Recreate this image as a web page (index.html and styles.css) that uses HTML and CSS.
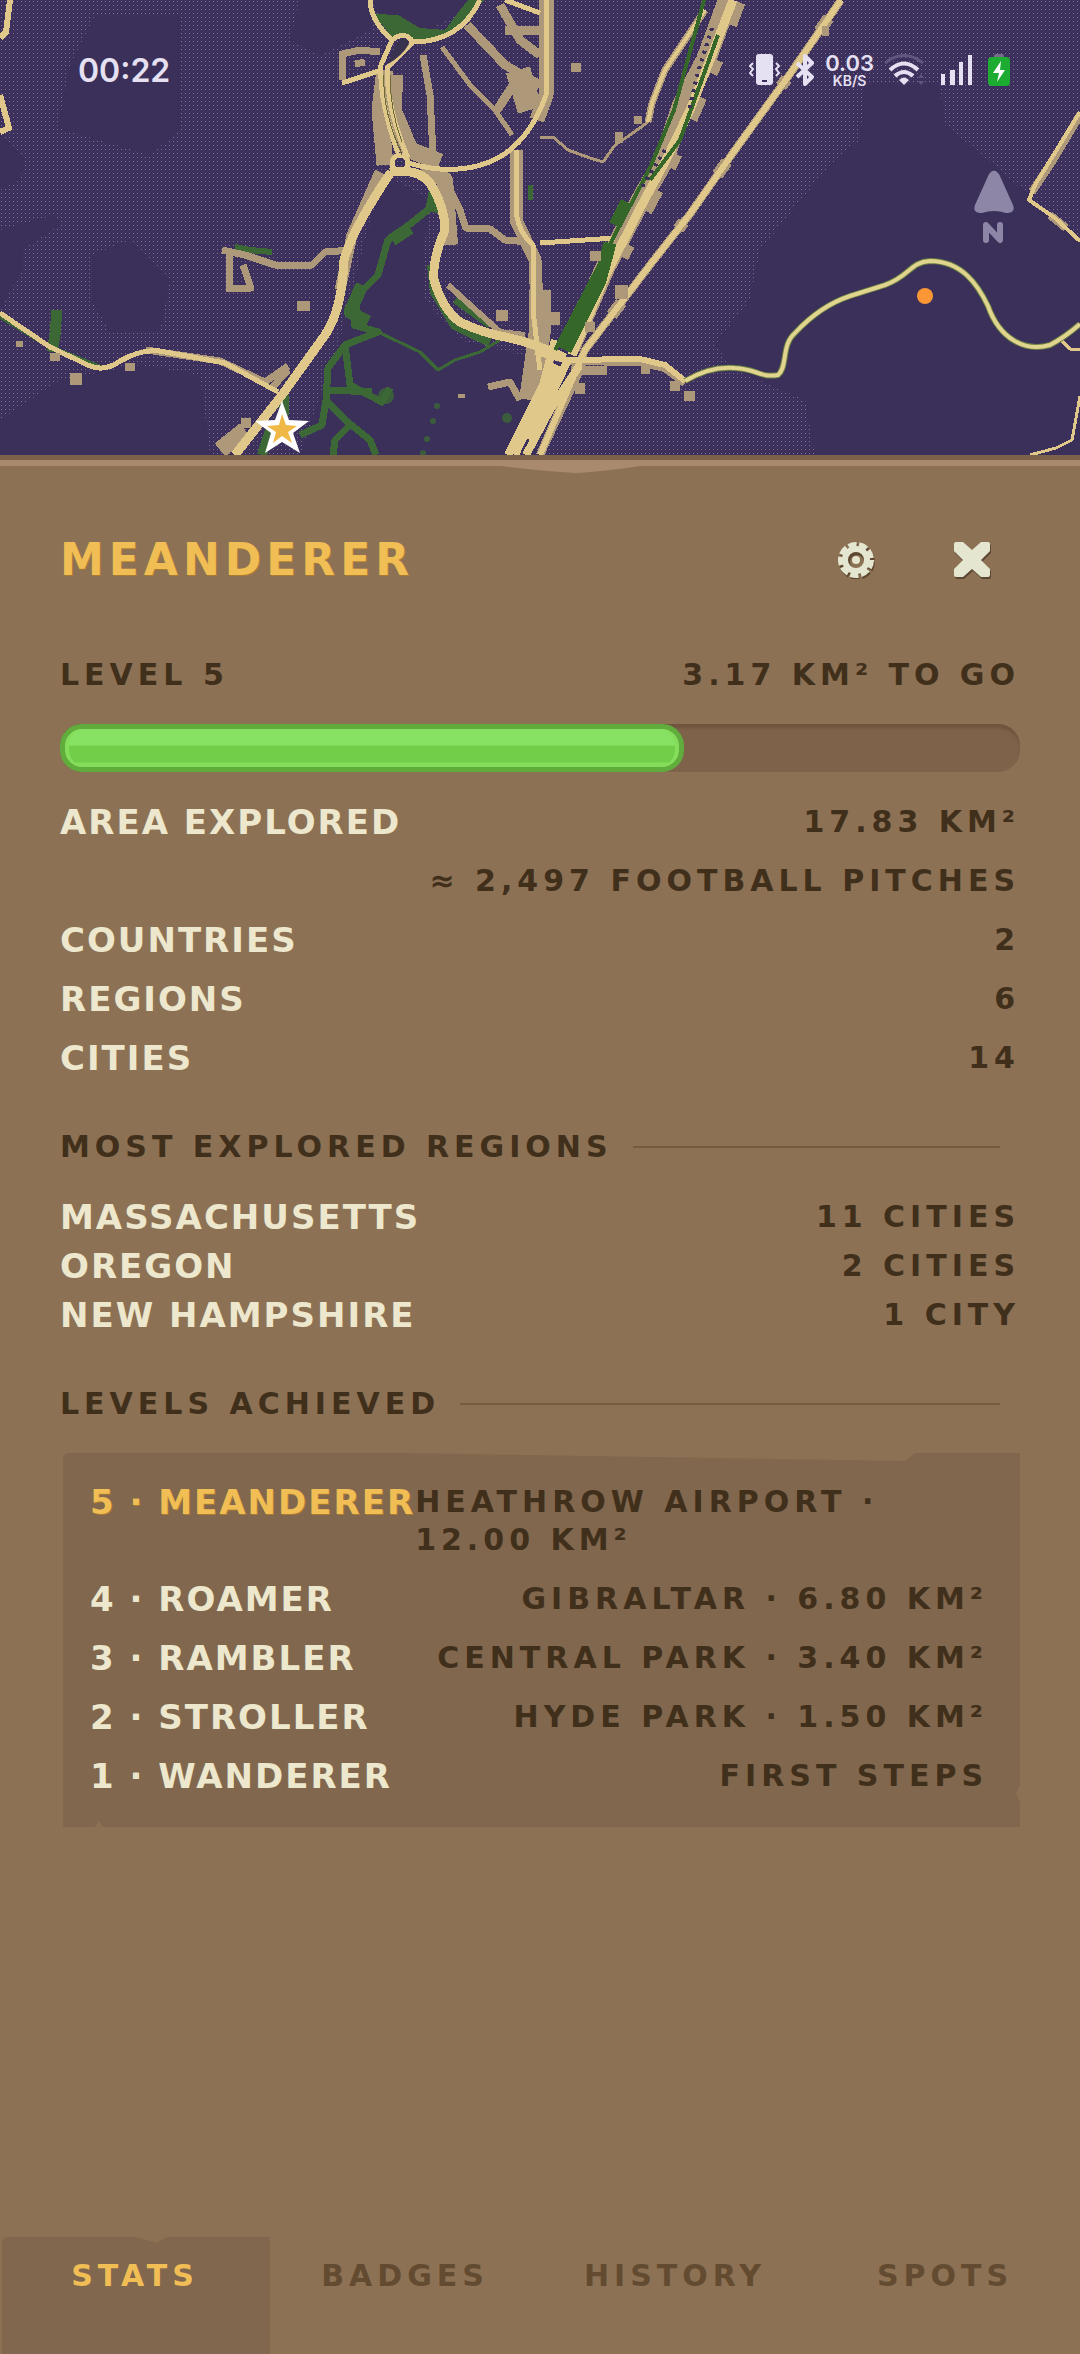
FILE: index.html
```html
<!DOCTYPE html>
<html lang="en">
<head>
<meta charset="utf-8">
<meta name="viewport" content="width=device-width, initial-scale=1">
<title>Meanderer</title>
<link rel="stylesheet" href="styles.css">
</head>
<body>
<div class="app">
  <header class="map">
    <svg class="map-art" viewBox="0 0 1080 455" preserveAspectRatio="xMidYMid slice" aria-hidden="true">
      <defs>
        <pattern id="dots" width="4" height="4" patternUnits="userSpaceOnUse">
          <rect width="4" height="4" fill="#3b2f5c"/>
          <rect x="1" y="1" width="1" height="1" fill="#8a7391"/>
          <rect x="3" y="3" width="1" height="1" fill="#46376c"/>
        </pattern>
      </defs>
      <rect width="1080" height="455" fill="url(#dots)"/>
      <!-- unlit ground -->
      <g fill="#3a3059">
        <path d="M95 15H180V130L150 155 58 128 70 65Z"/>
        <path d="M300 0H370V30L320 55 290 40Z"/>
        <path d="M0 135L25 160 20 180 0 190Z"/>
        <path d="M0 230L55 215 60 225 22 250V270L0 310Z"/>
        <path d="M92 255L130 240 170 280 160 330 110 332 92 300Z"/>
        <path d="M60 380L140 365 200 375 210 455H0V420Z"/>
        <path d="M385 175L430 200 425 240 425 300 460 340 540 360 535 455H300L340 340 365 240Z"/>
        <path d="M865 85H940L945 125 1000 170 1080 240V455H815L805 400 735 370 715 345 750 300 760 250 830 165 860 140Z"/>
        <path d="M445 0H480L420 35 385 25 372 0Z"/>
      </g>
      <g fill="none" stroke-linejoin="round" shape-rendering="crispEdges">
        <!-- parks and trails -->
        <g stroke="#3c6836" stroke-width="7">
          <path d="M57 310L55 335 52 352" stroke-width="11"/>
          <path d="M430 175L434 205 400 232 388 240 378 275 358 295 354 325 378 332 345 345 328 368 326 400 345 420 370 440 376 455"/>
          <path d="M437 185L432 212" stroke-width="14"/>
          <path d="M410 228L392 240M362 285L350 312 368 322" stroke-width="13"/>
          <path d="M345 345L350 385 382 402 390 388M330 390L372 392M326 400L322 425 300 435M350 425L335 440 333 455"/>
          <path d="M378 332L420 352 438 370 455 360 480 352 500 340" stroke-width="3"/>
          <path d="M432 265L435 292 455 325 490 342" stroke-width="10"/>
          <path d="M0 316L52 348 102 368" stroke-width="5"/>
          <path d="M235 247L250 250 272 252" stroke-width="6"/>
          <path d="M284 395V415M262 455L270 430" stroke-width="10"/>
          <path d="M525 420L514 445M545 355L530 370M455 300L490 325"/>
          <path d="M530 185V200" stroke-width="5"/>
        </g>
        <path d="M370 0L376 14 398 15 420 28 445 30 460 10 468 0H484L455 34 420 40 392 37 374 15Z" fill="#3c6836"/>
        <!-- built-up land -->
        <g stroke="#ae987a" stroke-width="7">
          <path d="M230 252L229 289 251 288 243 265M222 250L245 255 275 265 312 265 325 252 352 250"/>
          <path d="M342 80V54L360 50 380 52M355 64L365 62"/>
          <path d="M385 70L380 110 385 165M395 75L393 110 410 150 440 162" stroke-width="17"/>
          <path d="M423 55L430 95 433 155"/>
          <path d="M442 47L470 85 495 110 512 135" stroke-width="5"/>
          <path d="M467 25L505 65 540 85M500 5L520 40 540 55M505 30H540M497 110L520 75" stroke-width="9"/>
          <path d="M518 70L530 110" stroke-width="25"/>
          <path d="M425 165L445 180 450 245" stroke-width="16"/>
          <path d="M450 190L460 210 466 228 490 229 505 240 530 242" stroke-width="7"/>
          <path d="M516 150V220L535 260 538 330" stroke-width="13"/>
          <path d="M448 285L470 305 500 332 525 335" stroke-width="6"/>
          <path d="M380 172L352 235 340 290" stroke-width="11"/>
          <path d="M146 350L220 361 265 382 288 366M270 390L288 370M488 387L510 382 520 400"/>
          <path d="M220 450L245 430" stroke-width="17"/>
          <path d="M546 0V95L537 120" stroke-width="15"/>
          <path d="M728 0L706 60 682 105 664 160 638 205 605 268 570 348" stroke-width="20"/>
          <path d="M733 0L710 60 688 110 666 160 638 212 606 275" stroke-width="26" stroke-dasharray="24 38 14 26"/>
          <path d="M841 0L790 74 735 150 690 214 650 265 585 350 540 455" stroke-width="8"/>
          <path d="M841 0L790 74 735 150 690 214 650 265 585 350 540 455" stroke-width="12" stroke-dasharray="0 22 16 58 9 71"/>
          <path d="M705 10L665 70 652 103 648 122" stroke-width="7"/>
          <path d="M565 361L640 362 665 368 685 383" stroke-width="8"/>
          <path d="M1080 115L1050 165 1032 192M1050 215L1066 228M580 370L540 455" stroke-width="8"/>
          <path d="M540 290V330L530 400" stroke-width="22"/>
          <path d="M540 137L553 137 568 150 590 158 603 162 615 145 630 135 648 122 652 108" stroke-width="3"/>
        </g>
        <!-- roads -->
        <g stroke="#dfc889" stroke-width="6">
          <path d="M0 313L50 347 90 366Q105 372 120 361Q145 347 165 352L225 363 278 392" stroke-width="5"/>
          <path d="M391 172Q352 230 344 260Q342 310 325 335L282 395 235 455" stroke-width="9"/>
          <path d="M370 0Q370 20 392 40Q405 30 413 42Q460 42 480 0M392 40L381 65Q379 100 398 153M413 42L387 68Q387 110 408 158" stroke-width="5"/>
          <circle cx="400" cy="163" r="8" stroke-width="5"/>
          <path d="M342 83L382 70M505 0L540 13" stroke-width="5"/>
          <path d="M390 172Q418 168 430 183Q445 207 445 230Q432 260 434 280Q443 310 460 322Q482 333 510 338Q540 345 565 358" stroke-width="9"/>
          <path d="M408 163Q460 178 498 158Q530 140 546 95V0M516 150V210Q518 232 533 245V310L540 370" stroke-width="5"/>
          <path d="M733 0L710 60 690 110 666 160 638 212 606 275 572 355" stroke-width="9"/>
          <path d="M705 10L665 70 652 103 648 122" stroke-width="4"/>
          <path d="M841 0L790 74 735 150 690 214 650 265 585 350 540 455"/>
          <path d="M535 352L565 360 640 359 665 365 685 381"/>
          <path d="M540 243L615 238" stroke-width="5"/>
          <path d="M555 340L543 385 508 455M568 360L530 440M580 365L550 410 526 455M557 365L515 455" stroke-width="8"/>
          <path d="M10 0L6 32 0 38M0 95L9 128 0 132"/>
          <path d="M1080 112L1035 185 1029 200 1055 218 1080 241" stroke-width="4"/>
          <path d="M1080 396L1072 440 1056 448 1030 455M1062 341L1070 349H1080" stroke-width="3"/>
        </g>
        <path d="M704 0L674 110 650 168 620 225 555 350M718 35L680 140 650 180" stroke="#356729" stroke-width="4"/>
        <path d="M627 202L615 225M610 243L600 280 565 350" stroke="#356729" stroke-width="13"/>
        <path d="M712 28L698 72 689 110M665 150L640 190" stroke="#3a3059" stroke-width="4" stroke-dasharray="3 5"/>
        <path d="M384 75Q382 110 402 155M390 75Q390 110 402 142" stroke="#6c6b37" stroke-width="1"/>
      </g>
      <path d="M397 43Q404 34 409 44Q402 56 388 64Z" fill="#38324e"/>
      <path d="M685 381Q710 366 735 368C757 369 760 378 778 375C788 367 781 345 795 333Q820 306 850 296L885 285C910 276 910 262 930 261C962 261 978 285 988 306C1000 340 1026 352 1050 345Q1065 337 1080 324" fill="none" stroke="#6c8045" stroke-width="6"/>
      <path d="M685 381Q710 366 735 368C757 369 760 378 778 375C788 367 781 345 795 333Q820 306 850 296L885 285C910 276 910 262 930 261C962 261 978 285 988 306C1000 340 1026 352 1050 345Q1065 337 1080 324" fill="none" stroke="#e0d48e" stroke-width="4"/>
      <path d="M297 301H310V311H297ZM70 373H82V385H70ZM125 363H135V371H125ZM16 341H23V347H16ZM50 353H60V361H50ZM241 418H251V428H241ZM496 310H508V321H496ZM458 394H465V398H458ZM571 63H581V72H571ZM634 116H642V124H634ZM615 132H623V143H615ZM615 285H628V299H615ZM590 251H601V261H590ZM585 322H595V332H585ZM575 383H585V394H575ZM582 366H607V375H582ZM641 366H650V374H641ZM670 381H680V391H670ZM684 391H695V401H684ZM822 26H829V36H822ZM542 312H560V325H542Z" fill="#ae987a"/>
      <g fill="#3c6836" fill-opacity=".8"><circle cx="507" cy="418" r="5"/><circle cx="437" cy="406" r="3"/><circle cx="433" cy="421" r="3"/><circle cx="427" cy="439" r="3"/><circle cx="423" cy="453" r="3"/><circle cx="386" cy="396" r="8"/></g>
      <circle cx="925" cy="296" r="8" fill="#fb9735"/>
      <path d="M282 401L289 420 309 421 293 433 300 453 282 442 265 453 271 433 255 421 275 420Z" fill="#fff"/>
      <path d="M282 414L286 425 297 426 288 432 292 443 282 436 273 443 276 432 267 426 279 425Z" fill="#f0b945"/>
      <path d="M989 174Q994 167 999 174L1013 205Q1016 213 1006 213Q994 209 982 213Q972 213 975 205Z" fill="#8d86a6"/>
      <path d="M986 240V225L1000 240V225" fill="none" stroke="#8d86a6" stroke-width="6" stroke-linejoin="round" stroke-linecap="round"/>
    </svg>
    <div class="status">
      <time class="clock">00:22</time>
      <div class="status-icons">
        <svg width="32" height="32" viewBox="0 0 32 32"><rect x="7" width="17" height="31" rx="3" fill="#e5e0f2"/><path d="M13 27H18" stroke="#3b2f5c" stroke-width="2"/><path d="M4 9L1 12 4 15 1 19 4 22M27 9L30 12 27 15 30 19 27 22" fill="none" stroke="#e5e0f2" stroke-width="2"/></svg>
        <svg width="20" height="32" viewBox="0 0 20 32"><path d="M2 9L17 23 10 30V2L17 9 2 23" fill="none" stroke="#e5e0f2" stroke-width="4" stroke-linejoin="round"/></svg>
        <div class="speed"><span class="rate">0.03</span><span class="unit">KB/S</span></div>
        <svg width="42" height="32" viewBox="0 0 42 32"><path d="M1 9Q20-6 39 9" fill="none" stroke="#615580" stroke-width="3"/><path d="M6 16Q20 3 34 16M11 22Q20 14 29 22" fill="none" stroke="#e5e0f2" stroke-width="4"/><path d="M15 26Q20 21 25 26L20 31Z" fill="#e5e0f2"/><path d="M34 24L37 20 40 24ZM34 27L37 31 40 27Z" fill="#615580"/></svg>
        <svg width="34" height="32" viewBox="0 0 34 32"><path d="M1 20H5V31H1ZM10 16H15V31H10ZM19 8H23V31H19ZM28 1H32V31H28Z" fill="#e5e0f2"/></svg>
        <svg width="22" height="32" viewBox="0 0 22 32"><rect x="6" width="10" height="6" rx="2" fill="#766d8c"/><rect y="3" width="22" height="29" rx="4" fill="#1dac32"/><path d="M13 7L5 19H11L9 28 17 16H12Z" fill="#fff"/></svg>
      </div>
    </div>
  </header>

  <main class="sheet">
    <svg class="sheet-edge" viewBox="0 0 1080 20" preserveAspectRatio="none" aria-hidden="true"><path d="M0 0H1080V5H0Z" fill="#7c624a"/><path d="M0 5H1080V11H640Q600 17 575 18Q545 16 500 11H0Z" fill="#a98a6e"/></svg>
    <div class="title-row">
      <h1>MEANDERER</h1>
      <div class="actions">
        <button type="button" aria-label="Settings"><svg width="38" height="38" viewBox="0 0 38 38"><g fill="none" stroke="#5c4832"><circle cx="20" cy="21" r="10" stroke-width="6"/><circle cx="20" cy="21" r="15" stroke-width="6" stroke-dasharray="8 2.47"/></g><g fill="none" stroke="#e5e6d0"><circle cx="19" cy="19" r="11" stroke-width="6"/><circle cx="19" cy="19" r="15" stroke-width="6" stroke-dasharray="8 2.47"/></g><circle cx="19" cy="19" r="4" fill="#e5e6d0"/></svg></button>
        <button type="button" aria-label="Close"><svg width="38" height="38" viewBox="0 0 38 38"><path d="M1 3Q1 1 3 1H10L19 9 28 1H35Q37 1 37 3V10L28 19 37 28V34Q37 36 35 36H28L19 28 10 36H3Q1 36 1 34V28L10 19 1 10Z" fill="#5c4832" transform="translate(1 2)"/><path d="M1 3Q1 1 3 1H10L19 9 28 1H35Q37 1 37 3V10L28 19 37 28V34Q37 36 35 36H28L19 28 10 36H3Q1 36 1 34V28L10 19 1 10Z" fill="#e5e6d0"/></svg></button>
      </div>
    </div>

    <section class="progress">
      <div class="row"><span class="muted">LEVEL 5</span><span class="muted">3.17 KM² TO GO</span></div>
      <div class="track" role="progressbar" aria-label="Level 5" aria-valuenow="65" aria-valuemin="0" aria-valuemax="100"><div class="fill" style="width:65%"></div></div>
    </section>

    <dl class="stats">
      <div class="row"><dt>AREA EXPLORED</dt><dd>17.83 KM²</dd></div>
      <div class="row row-end"><dd>≈ 2,497 FOOTBALL PITCHES</dd></div>
      <div class="row"><dt>COUNTRIES</dt><dd>2</dd></div>
      <div class="row"><dt>REGIONS</dt><dd>6</dd></div>
      <div class="row"><dt>CITIES</dt><dd>14</dd></div>
    </dl>

    <h2>MOST EXPLORED REGIONS</h2>
    <dl class="regions">
      <div class="row"><dt>MASSACHUSETTS</dt><dd>11 CITIES</dd></div>
      <div class="row"><dt>OREGON</dt><dd>2 CITIES</dd></div>
      <div class="row"><dt>NEW HAMPSHIRE</dt><dd>1 CITY</dd></div>
    </dl>

    <h2>LEVELS ACHIEVED</h2>
    <dl class="levels">
      <div class="row current"><dt>5 · MEANDERER</dt><dd>HEATHROW AIRPORT · 12.00 KM²</dd></div>
      <div class="row"><dt>4 · ROAMER</dt><dd>GIBRALTAR · 6.80 KM²</dd></div>
      <div class="row"><dt>3 · RAMBLER</dt><dd>CENTRAL PARK · 3.40 KM²</dd></div>
      <div class="row"><dt>2 · STROLLER</dt><dd>HYDE PARK · 1.50 KM²</dd></div>
      <div class="row"><dt>1 · WANDERER</dt><dd>FIRST STEPS</dd></div>
    </dl>
  </main>

  <nav class="tabs">
    <button type="button" class="tab active" aria-current="page">STATS</button>
    <button type="button" class="tab">BADGES</button>
    <button type="button" class="tab">HISTORY</button>
    <button type="button" class="tab">SPOTS</button>
  </nav>
</div>
</body>
</html>
```
FILE: styles.css
```css
:root {
  --ground: #8c7154;
  --panel: #81674d;
  --cream: #ece7cd;
  --ink: #402f1b;
  --gold: #f0be55;
  --tracking: 5px;
  --tracking-tight: 2px;
}
* { box-sizing: border-box; }
body {
  margin: 0;
  background: var(--ground);
  color: var(--ink);
  font-family: "DejaVu Sans", sans-serif;
}
.app { display: flex; flex-direction: column; min-height: 100vh; }

.map { position: relative; height: 455px; overflow: hidden; background: #3b2f5c; }
.map-art { display: block; width: 100%; height: 100%; }
.status {
  position: absolute;
  inset: 50px 70px auto 78px;
  display: flex;
  justify-content: space-between;
  align-items: center;
  height: 40px;
  color: #e5e0f2;
  font-family: Inter, sans-serif;
}
.clock { font-size: 32px; font-weight: 600; }
.status-icons { display: flex; align-items: center; gap: 14px; }
.status-icons svg { display: block; }
.speed { display: flex; flex-direction: column; align-items: center; font-weight: 600; margin: 0 -4px; }
.rate { font-size: 22px; line-height: 22px; }
.unit { font-size: 14px; line-height: 14px; }

.sheet { flex: 1; padding: 0 60px; }
.sheet-edge { display: block; width: calc(100% + 120px); height: 20px; margin: 0 -60px; }
.title-row { display: flex; justify-content: space-between; align-items: center; height: 80px; margin-top: 45px; }
h1, h2, dl, dd { margin: 0; }
h1 { color: var(--gold); font-size: 44px; line-height: 48px; letter-spacing: var(--tracking); text-shadow: 1px 1px #a97c32; }
.actions { display: flex; gap: 38px; padding-right: 9px; }
.actions button { display: grid; place-items: center; width: 78px; height: 78px; padding: 0; border: 0; background: none; cursor: pointer; }

.row { display: flex; justify-content: space-between; align-items: center; }
.row-end { justify-content: flex-end; }
.muted, dd, h2 { color: var(--ink); font-size: 30px; font-weight: 700; line-height: 38px; letter-spacing: var(--tracking); }
dt { color: var(--cream); font-size: 34px; font-weight: 700; line-height: 38px; letter-spacing: var(--tracking-tight); white-space: nowrap; }

.progress { margin-top: 56px; }
.track {
  height: 48px;
  margin-top: 30px;
  border-radius: 22px;
  background: #7e634a;
  box-shadow: inset 0 5px 3px -1px #70543e;
}
.fill {
  height: 48px;
  border: 5px solid #60ac3d;
  border-radius: 22px;
  background: linear-gradient(#87e163 42%, #72cd49 46%, #72cd49 86%, #85de5b 90%);
  box-shadow: inset 4px 0 #85de5b, inset -4px 0 #85de5b;
}
.stats { margin-top: 20px; }
.stats .row { min-height: 59px; }

h2 { display: flex; align-items: center; gap: 20px; margin: 41px 0 26px; padding-right: 20px; }
h2::after { content: ""; flex: 1; height: 2px; background: #765b40; }
.regions { padding-bottom: 5px; }
.regions .row { min-height: 49px; }
.levels {
  margin: 30px 0 0 3px;
  padding: 20px 32px 22px 27px;
  background: var(--panel);
  clip-path: polygon(0 3px, 4px 0, 35% 0, 88% 8px, 89% 0, 100% 0, 100% 332px, calc(100% - 4px) 340px, 100% 350px, 100% 100%, 40px 100%, 36px calc(100% - 6px), 32px 100%, 0 100%);
}
.levels .row { min-height: 59px; }
.levels .current { align-items: flex-start; padding: 10px 0; }
.current dt { color: var(--gold); text-shadow: 1px 1px #a97c32; }

.tabs { display: grid; grid-template-columns: repeat(4, 1fr); }
.tab {
  height: 117px;
  padding: 0 0 40px;
  border: 0;
  background: none;
  color: #634b31;
  font: 700 30px/38px "DejaVu Sans", sans-serif;
  letter-spacing: var(--tracking);
  cursor: pointer;
}
.tab.active {
  background: var(--panel);
  color: var(--gold);
  clip-path: polygon(2px 3px, 6px 0, 50% 0, 58% 6px, 62% 0, 100% 0, 100% 100%, 2px 100%);
}
```
